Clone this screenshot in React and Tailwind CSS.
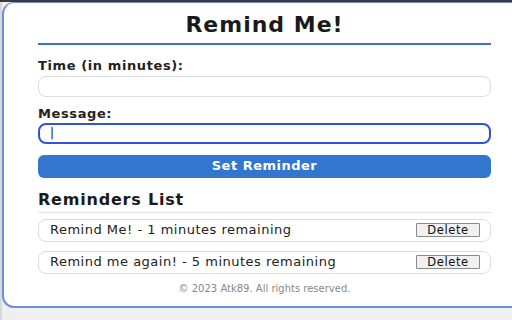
export default function App() {
  const reminders = [
    "Remind Me! - 1 minutes remaining",
    "Remind me again! - 5 minutes remaining",
  ];

  return (
    <div className="w-[512px] h-[320px] overflow-hidden bg-[#efefef] flex flex-col" style={{ fontFamily: '"DejaVu Sans", Verdana, sans-serif' }}>
      <div className="h-[2px] bg-[#3a3a3a] shrink-0" />
      <div className="flex flex-1 min-h-0">
        <div className="w-[2px] bg-[#d8d8d8] shrink-0" />
        <div className="flex-1 h-[306px] bg-white border-l-2 border-t border-b-2 border-[#6d8fd8] rounded-l-[12px]">
          <div className="ml-[34px] w-[453px] flex flex-col">
            <h1 className="text-[22px] font-bold text-[#1a1a1a] text-center mt-[10px] leading-[24px] tracking-[1px]">Remind Me!</h1>
            <div className="h-[1.5px] bg-[#3a72c9] mt-[6px]" />

            <label className="text-[13px] font-bold text-[#222] mt-[14px] leading-[14px] tracking-[0.6px]">Time (in minutes):</label>
            <div className="h-[21px] mt-[3px] rounded-[8px] border border-[#dcdcdc] bg-white" />

            <label className="text-[13px] font-bold text-[#222] mt-[10px] leading-[14px] tracking-[0.6px]">Message:</label>
            <div className="h-[21px] mt-[2px] rounded-[8px] border-2 border-[#2f55d4] bg-white flex items-center pl-[10px]">
              <span className="text-[12px] text-[#111] leading-none">|</span>
            </div>

            <button className="h-[23px] mt-[11px] rounded-[6px] bg-[#3276d0] text-white text-[13px] font-bold tracking-[0.5px]">
              Set Reminder
            </button>

            <h2 className="text-[16px] font-bold text-[#1a1a1a] mt-[13px] leading-[18px] tracking-[0.8px]">Reminders List</h2>
            <div className="h-px bg-[#e2e2e2] mt-[3px]" />

            <div className="flex flex-col gap-[9px] mt-[6px]">
              {reminders.map((r) => (
                <div key={r} className="h-[23px] rounded-[8px] border border-[#dcdcdc] flex items-center justify-between pl-[11px] pr-[10px]">
                  <span className="text-[13px] text-[#222] tracking-[0.5px]">{r}</span>
                  <button className="w-[64px] h-[14px] border border-[#8a8a8a] bg-[#f0f0f0] text-[11.5px] leading-[12px] tracking-[0.6px] text-[#111] rounded-[1px]">
                    Delete
                  </button>
                </div>
              ))}
            </div>

            <p className="text-[10px] leading-[10px] text-[#888] text-center mt-[10px]">© 2023 Atk89. All rights reserved.</p>
          </div>
        </div>
      </div>
    </div>
  );
}
